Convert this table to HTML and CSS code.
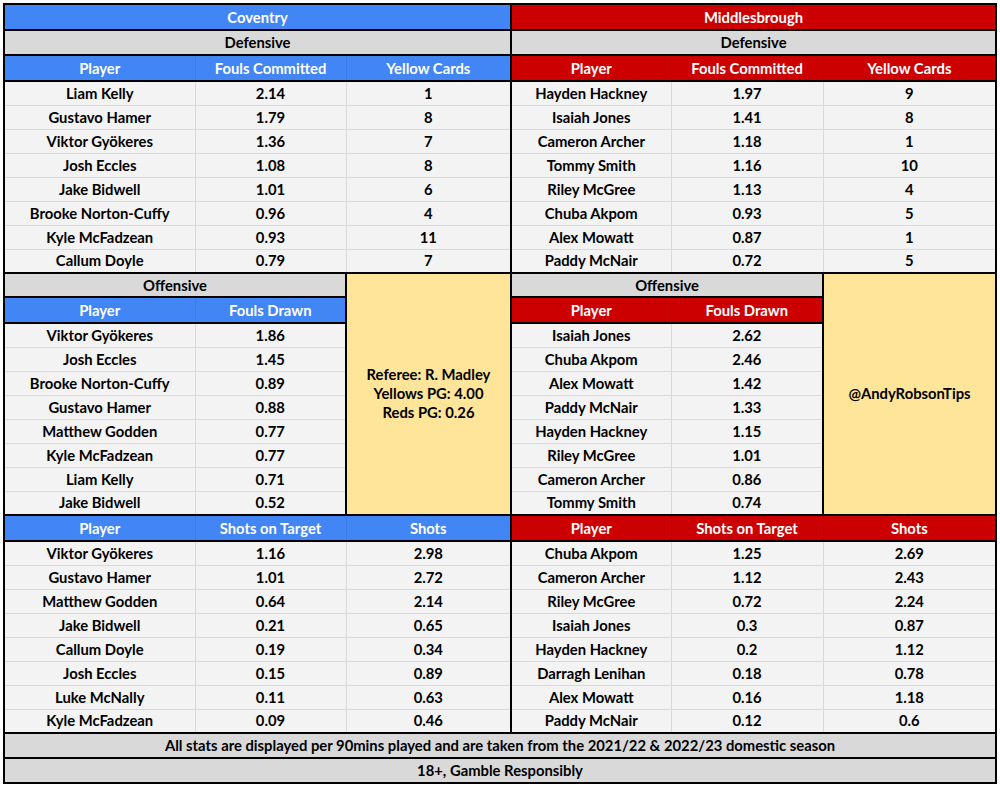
FILE: index.html
```html
<!DOCTYPE html>
<html>
<head>
<meta charset="utf-8">
<link rel="stylesheet" href="styles.css">
</head>
<body>
<table class="sheet">
  <colgroup>
    <col class="c1"><col class="c2"><col class="c3"><col class="c4"><col class="c5"><col class="c6">
  </colgroup>
  <tbody>
    <tr class="r-title">
      <td colspan="3" class="blue">Coventry</td>
      <td colspan="3" class="red split">Middlesbrough</td>
    </tr>
    <tr class="r-sub">
      <td colspan="3" class="grey">Defensive</td>
      <td colspan="3" class="grey split">Defensive</td>
    </tr>
    <tr class="r-head">
      <td class="blue">Player</td><td class="blue">Fouls Committed</td><td class="blue">Yellow Cards</td>
      <td class="red split">Player</td><td class="red">Fouls Committed</td><td class="red">Yellow Cards</td>
    </tr>
    <tr><td>Liam Kelly</td><td>2.14</td><td>1</td><td class="split">Hayden Hackney</td><td>1.97</td><td>9</td></tr>
    <tr><td>Gustavo Hamer</td><td>1.79</td><td>8</td><td class="split">Isaiah Jones</td><td>1.41</td><td>8</td></tr>
    <tr><td>Viktor Gyökeres</td><td>1.36</td><td>7</td><td class="split">Cameron Archer</td><td>1.18</td><td>1</td></tr>
    <tr><td>Josh Eccles</td><td>1.08</td><td>8</td><td class="split">Tommy Smith</td><td>1.16</td><td>10</td></tr>
    <tr><td>Jake Bidwell</td><td>1.01</td><td>6</td><td class="split">Riley McGree</td><td>1.13</td><td>4</td></tr>
    <tr><td>Brooke Norton-Cuffy</td><td>0.96</td><td>4</td><td class="split">Chuba Akpom</td><td>0.93</td><td>5</td></tr>
    <tr><td>Kyle McFadzean</td><td>0.93</td><td>11</td><td class="split">Alex Mowatt</td><td>0.87</td><td>1</td></tr>
    <tr><td>Callum Doyle</td><td>0.79</td><td>7</td><td class="split">Paddy McNair</td><td>0.72</td><td>5</td></tr>

    <tr class="r-sub r-off">
      <td colspan="2" class="grey">Offensive</td>
      <td rowspan="10" class="yellow"><div class="note">Referee: R. Madley<br>Yellows PG: 4.00<br>Reds PG: 0.26</div></td>
      <td colspan="2" class="grey split">Offensive</td>
      <td rowspan="10" class="yellow"><div class="note">@AndyRobsonTips</div></td>
    </tr>
    <tr class="r-head">
      <td class="blue">Player</td><td class="blue">Fouls Drawn</td>
      <td class="red split">Player</td><td class="red">Fouls Drawn</td>
    </tr>
    <tr><td>Viktor Gyökeres</td><td>1.86</td><td class="split">Isaiah Jones</td><td>2.62</td></tr>
    <tr><td>Josh Eccles</td><td>1.45</td><td class="split">Chuba Akpom</td><td>2.46</td></tr>
    <tr><td>Brooke Norton-Cuffy</td><td>0.89</td><td class="split">Alex Mowatt</td><td>1.42</td></tr>
    <tr><td>Gustavo Hamer</td><td>0.88</td><td class="split">Paddy McNair</td><td>1.33</td></tr>
    <tr><td>Matthew Godden</td><td>0.77</td><td class="split">Hayden Hackney</td><td>1.15</td></tr>
    <tr><td>Kyle McFadzean</td><td>0.77</td><td class="split">Riley McGree</td><td>1.01</td></tr>
    <tr><td>Liam Kelly</td><td>0.71</td><td class="split">Cameron Archer</td><td>0.86</td></tr>
    <tr><td>Jake Bidwell</td><td>0.52</td><td class="split">Tommy Smith</td><td>0.74</td></tr>

    <tr class="r-head">
      <td class="blue">Player</td><td class="blue">Shots on Target</td><td class="blue">Shots</td>
      <td class="red split">Player</td><td class="red">Shots on Target</td><td class="red">Shots</td>
    </tr>
    <tr><td>Viktor Gyökeres</td><td>1.16</td><td>2.98</td><td class="split">Chuba Akpom</td><td>1.25</td><td>2.69</td></tr>
    <tr><td>Gustavo Hamer</td><td>1.01</td><td>2.72</td><td class="split">Cameron Archer</td><td>1.12</td><td>2.43</td></tr>
    <tr><td>Matthew Godden</td><td>0.64</td><td>2.14</td><td class="split">Riley McGree</td><td>0.72</td><td>2.24</td></tr>
    <tr><td>Jake Bidwell</td><td>0.21</td><td>0.65</td><td class="split">Isaiah Jones</td><td>0.3</td><td>0.87</td></tr>
    <tr><td>Callum Doyle</td><td>0.19</td><td>0.34</td><td class="split">Hayden Hackney</td><td>0.2</td><td>1.12</td></tr>
    <tr><td>Josh Eccles</td><td>0.15</td><td>0.89</td><td class="split">Darragh Lenihan</td><td>0.18</td><td>0.78</td></tr>
    <tr><td>Luke McNally</td><td>0.11</td><td>0.63</td><td class="split">Alex Mowatt</td><td>0.16</td><td>1.18</td></tr>
    <tr><td>Kyle McFadzean</td><td>0.09</td><td>0.46</td><td class="split">Paddy McNair</td><td>0.12</td><td>0.6</td></tr>

    <tr class="r-foot">
      <td colspan="6" class="grey">All stats are displayed per 90mins played and are taken from the 2021/22 &amp; 2022/23 domestic season</td>
    </tr>
    <tr class="r-foot">
      <td colspan="6" class="grey">18+, Gamble Responsibly</td>
    </tr>
  </tbody>
</table>
</body>
</html>
```

FILE: styles.css
```css
html, body {
  margin: 0;
  padding: 0;
  background: #ffffff;
}

body {
  padding: 3px;
  font-family: Lato, "Open Sans", "Liberation Sans", sans-serif;
  font-weight: 700;
  font-size: 14.8px;
  color: #000;
}

.sheet {
  border-collapse: collapse;
  table-layout: fixed;
  width: 992px;
  border: 2px solid #000;
}

.c1 { width: 191px; }
.c2 { width: 151px; }
.c3 { width: 165px; }
.c4 { width: 160px; }
.c5 { width: 152px; }
.c6 { width: 173px; }

.sheet td {
  height: 24px;
  padding: 0 2px 1px;
  text-align: center;
  vertical-align: middle;
  white-space: nowrap;
  line-height: 18px;
  background: #f3f3f3;
  border: 1px solid #d9d9d9;
  box-sizing: border-box;
}

.sheet td.split {
  border-left: 2px solid #000;
}

.r-title td { height: 26px; }
.r-sub td { height: 25px; }
.r-off td { height: 24px; }
.r-head td { height: 26px; }
.r-foot td { height: 25px; }

.r-title td,
.r-sub td,
.r-head td,
.r-foot td {
  border-top: 2px solid #000;
  border-bottom: 2px solid #000;
}

.r-title td,
.r-sub td,
.r-foot td {
  border-left: 2px solid #000;
  border-right: 2px solid #000;
}

.sheet td.blue {
  background: #4285f4;
  color: #ffffff;
}

.r-head td.blue {
  border-left-color: #3d7be6;
  border-right-color: #3d7be6;
}

.sheet td.red {
  background: #cc0000;
  color: #ffffff;
}

.r-head td.red {
  border-left-color: #bb0000;
  border-right-color: #bb0000;
}

.r-head td.red.split {
  border-left: 2px solid #000;
}

.sheet td.grey {
  background: #d9d9d9;
  color: #000;
}

.sheet td.yellow {
  background: #ffe599;
  border: 2px solid #000;
}

.note {
  line-height: 19px;
}
```
